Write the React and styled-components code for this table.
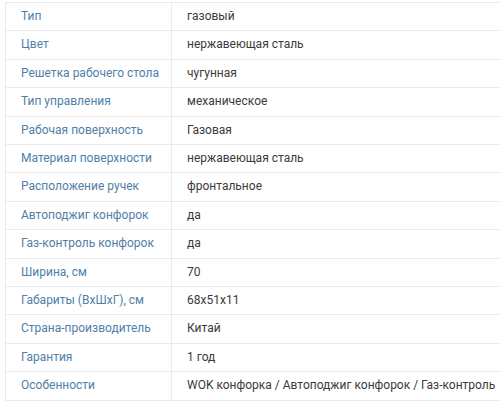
import React from "react";
import styled, { createGlobalStyle } from "styled-components";

const Global = createGlobalStyle`
  html, body { margin: 0; padding: 0; background: #fff; overflow: hidden; }
  body { font-family: Roboto, "Noto Sans", Arial, sans-serif; }
`;

const Wrap = styled.div`
  padding: 2px 0 0 5px;
  width: 540px;
`;

const Table = styled.table`
  border-collapse: collapse;
  table-layout: fixed;
  width: 530px;
  font-size: 12px;
  line-height: 15.4px;
`;

const LabelCol = styled.col`
  width: 166px;
`;

const Row = styled.tr``;

const Cell = styled.td`
  border: 1px solid #ebebeb;
  padding: 6px 15px;
  vertical-align: middle;
  white-space: nowrap;
  color: ${(p) => (p.$label ? "#4f80a8" : "#3a3a3a")};
`;

const rows = [
  ["Тип", "газовый"],
  ["Цвет", "нержавеющая сталь"],
  ["Решетка рабочего стола", "чугунная"],
  ["Тип управления", "механическое"],
  ["Рабочая поверхность", "Газовая"],
  ["Материал поверхности", "нержавеющая сталь"],
  ["Расположение ручек", "фронтальное"],
  ["Автоподжиг конфорок", "да"],
  ["Газ-контроль конфорок", "да"],
  ["Ширина, см", "70"],
  ["Габариты (ВхШхГ), см", "68x51x11"],
  ["Страна-производитель", "Китай"],
  ["Гарантия", "1 год"],
  ["Особенности", "WOK конфорка / Автоподжиг конфорок / Газ-контроль"],
];

export default function App() {
  return (
    <>
      <Global />
      <Wrap>
        <Table>
          <colgroup>
            <LabelCol />
            <col />
          </colgroup>
          <tbody>
            {rows.map(([k, v]) => (
              <Row key={k}>
                <Cell $label>{k}</Cell>
                <Cell>{v}</Cell>
              </Row>
            ))}
          </tbody>
        </Table>
      </Wrap>
    </>
  );
}
